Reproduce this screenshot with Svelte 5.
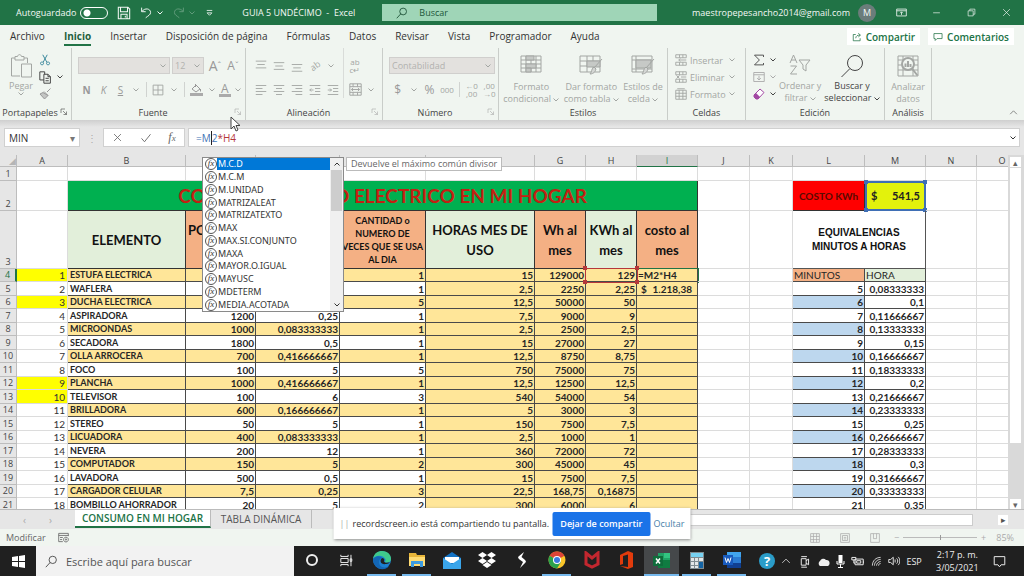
<script lang="ts">
  const tabs = ['Archivo', 'Inicio', 'Insertar', 'Disposición de página', 'Fórmulas', 'Datos', 'Revisar', 'Vista', 'Programador', 'Ayuda'];
  const columns = ['A', 'B', 'C', 'D', 'E', 'F', 'G', 'H', 'I', 'J', 'K', 'L', 'M', 'N', 'O'];
  const functions = ['M.C.D', 'M.C.M', 'M.UNIDAD', 'MATRIZALEAT', 'MATRIZATEXTO', 'MAX', 'MAX.SI.CONJUNTO', 'MAXA', 'MAYOR.O.IGUAL', 'MAYUSC', 'MDETERM', 'MEDIA.ACOTADA'];
  const marked = [1, 3, 9, 10];

  // elemento, potencia, horas, cantidad, horas mes, Wh, KWh, minutos, hora
  const rows = [
    ['ESTUFA ELECTRICA', '', '', '1', '15', '129000', '129', 'MINUTOS', 'HORA'],
    ['WAFLERA', '', '', '1', '2,5', '2250', '2,25', '5', '0,08333333'],
    ['DUCHA ELECTRICA', '', '', '5', '12,5', '50000', '50', '6', '0,1'],
    ['ASPIRADORA', '1200', '0,25', '1', '7,5', '9000', '9', '7', '0,11666667'],
    ['MICROONDAS', '1000', '0,083333333', '1', '2,5', '2500', '2,5', '8', '0,13333333'],
    ['SECADORA', '1800', '0,5', '1', '15', '27000', '27', '9', '0,15'],
    ['OLLA ARROCERA', '700', '0,416666667', '1', '12,5', '8750', '8,75', '10', '0,16666667'],
    ['FOCO', '100', '5', '5', '750', '75000', '75', '11', '0,18333333'],
    ['PLANCHA', '1000', '0,416666667', '1', '12,5', '12500', '12,5', '12', '0,2'],
    ['TELEVISOR', '100', '6', '3', '540', '54000', '54', '13', '0,21666667'],
    ['BRILLADORA', '600', '0,166666667', '1', '5', '3000', '3', '14', '0,23333333'],
    ['STEREO', '50', '5', '1', '150', '7500', '7,5', '15', '0,25'],
    ['LICUADORA', '400', '0,083333333', '1', '2,5', '1000', '1', '16', '0,26666667'],
    ['NEVERA', '200', '12', '1', '360', '72000', '72', '17', '0,28333333'],
    ['COMPUTADOR', '150', '5', '2', '300', '45000', '45', '18', '0,3'],
    ['LAVADORA', '500', '0,5', '1', '15', '7500', '7,5', '19', '0,31666667'],
    ['CARGADOR CELULAR', '7,5', '0,25', '3', '22,5', '168,75', '0,16875', '20', '0,33333333'],
    ['BOMBILLO AHORRADOR', '20', '5', '2', '300', '6000', '6', '21', '0,35'],
  ];

  // line icons on a 16 x 16 box
  const icons: Record<string, string> = {
    save: 'M1.5 1.5h11l2 2v11h-13zM4 1.5v5h8v-5M4.5 14.500v-5h7v5M9.500 11v2',
    undo: 'M2 2v5h5M2.500 6.500C6 2 13 3 13 8c0 3-3 4-6 6.500',
    redo: 'M14 2v5H9M13.500 6.500C10 2 3 3 3 8c0 3 3 4 6 6.500',
    custom: 'M4 5h8M4.500 8.500L8 12l3.500-3.500z',
    search: 'M9.500 1.500a4.500 4.500 0 1 1 0 9a4.500 4.500 0 1 1 0-9zM6.500 9L1 15',
    display: 'M1 3h14v10H1zM1 5.500h14M8 11.500v-4M6 9l2-2l2 2',
    minimize: 'M2 8.500h12',
    restore: 'M2 5h9v9H2zM5 5V2h9v9h-3',
    close: 'M2 2l12 12M14 2L2 14',
    share: 'M6 4H2v10h11v-4M6 10c0-4 3-5 7-5M10 2l3.500 3L10 8',
    comment: 'M1.500 2.500h13v8h-8l-3 3v-3h-2z',
    launcher: 'M2 10V2h8M6 6l7 7M13 7v6H7',
    top: 'M1 1.500h14M3 6h10M1 10.500h14',
    middle: 'M1 3.500h14M3 8h10M1 12.500h14',
    bottom: 'M1 6h14M3 10.500h10M1 15h14',
    left: 'M1 2h14M1 6h9M1 10h14M1 14h9',
    center: 'M1 2h14M4 6h8M1 10h14M4 14h8',
    right: 'M1 2h14M6 6h9M1 10h14M6 14h9',
    outdent: 'M1 2h14M8 6h7M8 10h7M1 14h14M6 8H1M3 6L1 8l2 2',
    indent: 'M1 2h14M8 6h7M8 10h7M1 14h14M1 8h5M4 6l2 2l-2 2',
    merge: 'M1 1h14v14H1zM1 4.500h14M1 11.500h14M5 1v3.500M10.500 1v3.500M5 11.500V15M10.500 11.500V15M3 8h10M5 6L3 8l2 2M11 6l2 2l-2 2',
    borders: 'M1.500 1.500h13v13h-13zM8 1.500v13M1.500 8h13',
    cut: 'M5 1l5.500 10M11 1L5.500 11M4 10.500a2 2 0 1 0 .1 0M12 10.500a2 2 0 1 0 .1 0',
    copy: 'M6 11H1V1h6v3M6 4h5l3 3v8H6zM11 4v3h3M8 9h4M8 12h4',
    filldown: 'M1 2h14v12H1zM1 5h14M8 6.500v5.500M5.500 9.500L8 12l2.500-2.500',
    cellIns: 'M1 1h14v4H1zM1 11h14v4H1zM6 1v4M10.500 1v4M6 11v4M10.500 11v4M5 8h10M7 6L5 8l2 2',
    cellDel: 'M1 1h14v4H1zM1 11h14v4H1zM6 1v4M10.500 1v4M6 11v4M10.500 11v4M2 6l4 4M6 6l-4 4M8 8h7',
    cellFmt: 'M1 3h14v12H1zM1 7h14M1 11h14M5.500 3v12M10.500 3v12M3 1h10',
    cancel: 'M3 3l10 10M13 3L3 13',
    accept: 'M2 8.500l4 4.500L14 3',
    grid: 'M1 1h14v14H1zM1 5.500h14M1 10.500h14M5.500 1v14M10.500 1v14',
    pageView: 'M1 1h14v14H1zM4 4h8v8H4zM6 7h4M6 9.500h4',
    breakView: 'M1 1h14v14H1zM5.500 1v8h5V1',
    up: 'M2 11l6-6l6 6',
    cam: 'M4 4.500h6v8H4zM10 7l3-2v7l-3-2M4 2h7M4 15h7',
    battery: 'M5 5h10v7H5zM15 7.500h1v2h-1M1 3h5v3H1zM3.500 6v4H5M7 7h5v3H7z',
    wifi: 'M2 14C2 7 7 2 14 2M5 14c0-5 4-9 9-9M8 14c0-3 3-6 6-6M11 14c0-2 1-3 3-3',
    sound: 'M1 6h2.500L7 3v10L3.500 10H1zM9.500 6v4M11.500 4.500c2 2 2 5 0 7M13.500 2.500c3 3 3 8 0 11',
    note: 'M1.500 2h13v10H10l-2 2.500L6 12H1.500z',
    taskview: 'M1 1v2h9V1M1 15v-2h9v2M1 5.500h9v5H1zM13.500 1v14M12.500 6h2v3h-2z',
    record: 'M1 2h14v4M1 2v12h6M1 5h14M3 8h4M3 11h3M11.500 7.500a3.500 3.500 0 1 0 .1 0M11.500 10a1 1 0 1 0 .1 0',
  };
</script>

{#snippet icon(name: string, size = 12)}
  <svg class="icon" width={size} height={size} viewBox="0 0 16 16" aria-hidden="true"><path d={icons[name]} /></svg>
{/snippet}

{#snippet chevron()}
  <svg class="chevron" width="6" height="4" viewBox="0 0 6 4" aria-hidden="true"><path d="M.5 .5L3 3L5.500 .5" /></svg>
{/snippet}

<div class="excel">
  <header class="titlebar">
    <label class="autosave">Autoguardado <input type="checkbox" role="switch" /></label>
    <button aria-label="Guardar">{@render icon('save', 14)}</button>
    <button class="undo" aria-label="Deshacer">{@render icon('undo', 13)}{@render chevron()}</button>
    <button class="redo" aria-label="Rehacer">{@render icon('redo', 13)}{@render chevron()}</button>
    <button aria-label="Personalizar">{@render icon('custom', 11)}</button>
    <span class="document">GUIA 5 UNDÉCIMO&nbsp; - &nbsp;Excel</span>
    <label class="search">{@render icon('search', 12)}<input type="text" placeholder="Buscar" aria-label="Buscar" /></label>
    <span class="account">maestropepesancho2014@gmail.com</span>
    <span class="avatar">M</span>
    <div class="window-buttons">
      <button aria-label="Opciones de cinta">{@render icon('display', 11)}</button>
      <button aria-label="Minimizar">{@render icon('minimize', 9)}</button>
      <button aria-label="Restaurar">{@render icon('restore', 9)}</button>
      <button aria-label="Cerrar">{@render icon('close', 9)}</button>
    </div>
  </header>

  <nav class="tabs">
    {#each tabs as tab}
      <button class:active={tab === 'Inicio'}>{tab}</button>
    {/each}
    <div class="tab-actions">
      <button>{@render icon('share', 10)} Compartir</button>
      <button>{@render icon('comment', 10)} Comentarios</button>
    </div>
  </nav>

  <section class="ribbon">
    <div class="group">
      <div class="clipboard">
        <button class="big">
          <svg width="23" height="26" viewBox="0 0 23 26" class="art"><path d="M5 4H1.500v18H10M14 4h3.500v5M5 2.500h2.500C8 0 11 0 11.500 2.500H14V6H5zM11.500 10h10v13h-10z" /></svg>
          <span>Pegar</span>{@render chevron()}
        </button>
        <div class="stack dark">
          <button class="cut" aria-label="Cortar">{@render icon('cut', 12)}</button>
          <button aria-label="Copiar">{@render icon('copy', 13)}{@render chevron()}</button>
          <button aria-label="Copiar formato">
            <svg width="13" height="12" viewBox="0 0 13 12"><path d="M8 4l3.500-3.500M5 3.500l4 4M4 4.500L1 6l4.500 5L9 7.500z" fill="#c4c6c4" stroke="#999" /></svg>
          </button>
        </div>
      </div>
      <footer><span>Portapapeles</span><i class="dark">{@render icon('launcher', 8)}</i></footer>
    </div>

    <div class="group">
      <div class="tools">
        <div class="line">
          <div class="drop"><select class="font-name" aria-label="Fuente"><option></option></select>{@render chevron()}</div>
          <div class="drop"><select class="font-size" aria-label="Tamaño"><option>12</option></select>{@render chevron()}</div>
          <button class="letter big-a">A<sup>ˆ</sup></button>
          <button class="letter">A<sup>ˇ</sup></button>
        </div>
        <div class="line">
          <button class="letter n">N</button>
          <button class="letter k">K</button>
          <button class="letter s">S</button>
          {@render chevron()}
          <hr />
          <button aria-label="Bordes">{@render icon('borders', 12)}</button>
          {@render chevron()}
          <hr />
          <button aria-label="Relleno">
            <svg width="13" height="13" viewBox="0 0 13 13"><path d="M5.500 1v3M2 6l4-4l4 4l-4 3zM10.500 6v2.500" fill="none" stroke="#999" /><path d="M0 10h13v3H0z" fill="#aaa" /></svg>
          </button>
          {@render chevron()}
          <button class="letter underlined">A</button>
          {@render chevron()}
        </div>
      </div>
      <footer><span>Fuente</span><i>{@render icon('launcher', 8)}</i></footer>
    </div>

    <div class="group">
      <div class="align">
        <div class="tools">
          <div class="line">
            <button aria-label="Arriba">{@render icon('top', 12)}</button>
            <button aria-label="Medio">{@render icon('middle', 12)}</button>
            <button aria-label="Abajo">{@render icon('bottom', 12)}</button>
            <button class="angle">ab</button>
            {@render chevron()}
          </div>
          <div class="line">
            <button aria-label="Izquierda">{@render icon('left', 12)}</button>
            <button aria-label="Centro">{@render icon('center', 12)}</button>
            <button aria-label="Derecha">{@render icon('right', 12)}</button>
            <button aria-label="Disminuir sangría">{@render icon('outdent', 12)}</button>
            <button aria-label="Aumentar sangría">{@render icon('indent', 12)}</button>
          </div>
        </div>
        <div class="tools wrap">
          <div class="line"><button class="wrap-text">ab<br />c↵</button></div>
          <div class="line"><button aria-label="Combinar">{@render icon('merge', 13)}</button>{@render chevron()}</div>
        </div>
      </div>
      <footer><span>Alineación</span><i>{@render icon('launcher', 8)}</i></footer>
    </div>

    <div class="group">
      <div class="tools">
        <div class="line">
          <div class="drop"><select class="format" aria-label="Formato de número"><option>Contabilidad</option></select>{@render chevron()}</div>
        </div>
        <div class="line">
          <button class="letter">$</button>
          {@render chevron()}
          <button class="letter">%</button>
          <button class="zeros">000</button>
          <hr />
          <button class="decimals">←0<br />,00</button>
          <button class="decimals">,00<br />→0</button>
        </div>
      </div>
      <footer><span>Número</span><i>{@render icon('launcher', 8)}</i></footer>
    </div>

    <div class="group">
      <div class="bigs">
        <button class="big">
          <svg width="22" height="18" viewBox="0 0 22 18" class="art"><path d="M1 1h20v16H1zM1 5h20M1 9h20M1 13h20M6 1v16M11 1v16M16 1v16" /><path class="shade" d="M6 1h8v4H6zM6 9h10v4H6zM6 13h5v4H6z" /></svg>
          <span>Formato<br />condicional {@render chevron()}</span>
        </button>
        <button class="big">
          <svg width="24" height="20" viewBox="0 0 24 20" class="art"><path d="M1 1h20v16H1zM1 6h20M1 11h20M8 1v16M14 1v16" /><path class="shade" d="M8 6h13v6H8z" /><path class="brush" d="M23 4l-8 9M15 12l2 2c-1 4-4 5-6 5c2-2 1-5 4-7z" /></svg>
          <span>Dar formato<br />como tabla {@render chevron()}</span>
        </button>
        <button class="big">
          <svg width="24" height="20" viewBox="0 0 24 20" class="art"><path d="M1 1h20v16H1zM1 5h20M1 14h20M5 1v16" /><path class="shade" d="M5 5h15v8H5z" /><path class="brush" d="M23 4l-8 9M15 12l2 2c-1 4-4 5-6 5c2-2 1-5 4-7z" /></svg>
          <span>Estilos de<br />celda {@render chevron()}</span>
        </button>
      </div>
      <footer><span>Estilos</span></footer>
    </div>

    <div class="group">
      <div class="stack cells">
        <button>{@render icon('cellIns', 12)}<span>Insertar</span>{@render chevron()}</button>
        <button>{@render icon('cellDel', 12)}<span>Eliminar</span>{@render chevron()}</button>
        <button>{@render icon('cellFmt', 12)}<span>Formato</span>{@render chevron()}</button>
      </div>
      <footer><span>Celdas</span></footer>
    </div>

    <div class="group">
      <div class="edit">
        <div class="stack dark">
          <button aria-label="Autosuma"><svg class="icon" width="12" height="12" viewBox="0 0 16 16"><path d="M14 4V1.500H2L8.500 8L2 14.500h12V12" /></svg>{@render chevron()}</button>
          <button class="off" aria-label="Rellenar">{@render icon('filldown', 12)}{@render chevron()}</button>
          <button aria-label="Borrar">
            <svg width="12" height="12" viewBox="0 0 12 12"><path d="M1 7L7 1l4 3.500L5 11H3L1 9z" fill="#fff" stroke="#a349a4" /><path d="M1 7l2-2l4 4l-2 2H3L1 9z" fill="#a349a4" /></svg>
            {@render chevron()}
          </button>
        </div>
        <button class="big">
          <svg width="22" height="22" viewBox="0 0 22 22" class="art"><path d="M1 9L4.500 1L8 9M2 6h5M1.500 12h6l-6 8h6.500M10 6h11l-4 5v6l-3-2v-4z" /></svg>
          <span>Ordenar y<br />filtrar {@render chevron()}</span>
        </button>
        <button class="big dark">
          <svg width="24" height="24" viewBox="0 0 24 24" class="art"><path d="M15 1.500a7.500 7.500 0 1 1 0 15a7.500 7.500 0 1 1 0-15zM10 14.500L1.500 23" /></svg>
          <span>Buscar y<br />seleccionar {@render chevron()}</span>
        </button>
      </div>
      <footer><span>Edición</span></footer>
    </div>

    <div class="group">
      <div class="bigs">
        <button class="big">
          <svg width="22" height="22" viewBox="0 0 22 22" class="art"><path d="M1 1h20v20H1zM1 5h20M1 10h20M1 15h20M6 1v20M16 1v20" /><path d="M11 3a6 6 0 1 1 0 12a6 6 0 1 1 0-12zM15 13.500l5.500 7" fill="#f0f5f0" stroke-width="2" /><path d="M8.500 12V8.500M11 12V6M13.500 12V9" stroke-width="2" /></svg>
          <span>Analizar<br />datos</span>
        </button>
      </div>
      <footer><span>Análisis</span></footer>
    </div>
    <button class="collapse" aria-label="Contraer la cinta">{@render icon('up', 9)}</button>
  </section>

  <section class="formula-bar">
    <div class="name-box"><input type="text" value="MIN" aria-label="Cuadro de nombres" /><button aria-label="Nombres">▾</button></div>
    <span class="grip">⋮</span>
    <div class="formula-buttons">
      <button aria-label="Cancelar">{@render icon('cancel', 11)}</button>
      <button aria-label="Introducir">{@render icon('accept', 12)}</button>
      <button class="fx">f<small>x</small></button>
    </div>
    <div class="formula">
      <div class="formula-text" contenteditable="true" role="textbox" tabindex="0" aria-label="Barra de fórmulas"><span class="ref-m">=M<span class="caret">2</span></span><span class="ref-h">*H4</span></div>
      <button aria-label="Expandir">{@render chevron()}</button>
    </div>
  </section>

  <main class="sheet">
    <div class="cells-area">
      <table>
        <colgroup>
          <col class="w-row" />
          {#each columns as column}
            <col class="w-{column}" />
          {/each}
        </colgroup>
        <thead>
          <tr>
            <th class="corner">◢</th>
            {#each columns as column}
              <th class:current={column === 'I'}>{column}</th>
            {/each}
          </tr>
        </thead>
        <tbody>
          <tr class="r1">
            <th>1</th>
            {#each columns as _}<td></td>{/each}
          </tr>
          <tr class="r2">
            <th>2</th>
            <td></td>
            <td colspan="8" class="heading">CONSUMO DIARIO ELECTRICO EN MI HOGAR</td>
            <td></td><td></td>
            <td class="cost">COSTO KWh</td>
            <td class="price"><div class="money"><span>$</span><span>541,5</span></div><i class="handle tl"></i><i class="handle tr"></i><i class="handle bl"></i><i class="handle br"></i></td>
            <td></td><td></td>
          </tr>
          <tr class="r3">
            <th>3</th>
            <td></td>
            <td class="title mint">ELEMENTO</td>
            <td class="title orange">POTENCIA W</td>
            <td class="title orange"></td>
            <td class="title orange small">CANTIDAD o<br />NUMERO DE<br />VECES QUE SE USA<br />AL DIA</td>
            <td class="title mint">HORAS MES DE USO</td>
            <td class="title orange">Wh al mes</td>
            <td class="title mint">KWh al mes</td>
            <td class="title orange">costo al mes</td>
            <td></td><td></td>
            <td colspan="2" class="equiv">EQUIVALENCIAS<br />MINUTOS A HORAS</td>
            <td></td><td></td>
          </tr>
          {#each rows as row, i}
            <tr class="data" class:band={i % 2 === 0}>
              <th class:current={i === 0}>{i + 4}</th>
              <td class="count" class:yellow={marked.includes(i + 1)}>{i + 1}</td>
              <td class="box item">{row[0]}</td>
              <td class="box">{row[1]}</td>
              <td class="box">{row[2]}</td>
              <td class="box">{row[3]}</td>
              <td class="box sand">{row[4]}</td>
              <td class="box sand">{row[5]}</td>
              <td class="box sand" class:ref={i === 0}>{row[6]}{#if i === 0}<i class="handle tl"></i><i class="handle tr"></i><i class="handle bl"></i><i class="handle br"></i>{/if}</td>
              {#if i === 0}
                <td class="box sand editing">=M2*H4</td>
              {:else if i === 1}
                <td class="box sand"><div class="money"><span>$</span><span>1.218,38</span></div></td>
              {:else}
                <td class="box sand"></td>
              {/if}
              <td></td><td></td>
              {#if i === 0}
                <td class="box plain orange">{row[7]}</td>
                <td class="box plain mint">{row[8]}</td>
              {:else}
                <td class="box" class:blue={i % 2 === 0} class:white={i % 2 !== 0}>{row[7]}</td>
                <td class="box white">{row[8]}</td>
              {/if}
              <td></td><td></td>
            </tr>
          {/each}
        </tbody>
      </table>
    </div>
    <div class="vscroll"><button aria-label="Subir">▴</button><span></span><button aria-label="Bajar">▾</button></div>

    <div class="suggest">
      <ul role="listbox" aria-label="Funciones">
        {#each functions as name, i}
          <li role="option" aria-selected={i === 0} class:selected={i === 0}><b>fx</b><span>{name}</span></li>
        {/each}
      </ul>
      <div class="suggest-scroll">{@render chevron()}<span></span>{@render chevron()}</div>
    </div>
    <div class="hint" role="tooltip">Devuelve el máximo común divisor</div>
  </main>

  <nav class="sheet-tabs">
    <span class="arrows"><button aria-label="Anterior">‹</button><button aria-label="Siguiente">›</button></span>
    <button class="sheet-tab active">CONSUMO EN MI HOGAR</button>
    <button class="sheet-tab">TABLA DINÁMICA</button>
    <div class="hscroll"><span></span><button aria-label="Derecha">▸</button></div>
  </nav>

  <footer class="status">
    <span class="mode">Modificar</span>
    {@render icon('record', 11)}
    <div class="views">
      {@render icon('grid', 10)}
      {@render icon('pageView', 10)}
      {@render icon('breakView', 10)}
    </div>
    <span class="minus">−</span>
    <input type="range" min="10" max="160" value="85" aria-label="Zoom" />
    <span class="plus">+</span>
    <span class="zoom">85%</span>
  </footer>

  <footer class="taskbar">
    <button class="start" aria-label="Inicio"><svg width="13" height="13" viewBox="0 0 13 13"><path d="M0 2l6-1v5H0zM7 1l6-1v6H7zM0 7h6v5l-6-1zM7 7h6v6l-6-1z" fill="#fff" /></svg></button>
    <label class="task-search">{@render icon('search', 13)}<input type="text" placeholder="Escribe aquí para buscar" aria-label="Escribe aquí para buscar" /></label>
    <div class="apps">
      <button aria-label="Cortana"><svg width="14" height="14" viewBox="0 0 14 14"><circle cx="7" cy="7" r="5" fill="none" stroke="#eee" stroke-width="2" /></svg></button>
      <button aria-label="Vista de tareas">{@render icon('taskview', 13)}</button>
      <button class="open" aria-label="Edge"><svg width="20" height="20" viewBox="0 0 20 20"><circle cx="10" cy="10" r="9" fill="#1b7fd0" /><path d="M1 9C2 3 6 1 10 1c6 0 9 4 9 8c0 3-3 4-6 3.500c-1-.5 1-1 .5-3C12 5 4 4 1 9z" fill="#3fc98c" /><path d="M1 9c3-4 8-3 9-1c-4 1-4 7 0 9c3 1 6 0 7-1c-3 4-9 4-12 1.500C2 15 1 12 1 9z" fill="#1366b5" /><path d="M10 8c-3 3-1 7 4 6c2 0 3-1 4-1.500c-2 0-6 1-6-1.500c1-1 0-3-2-3z" fill="#202020" /></svg></button>
      <button class="open" aria-label="Explorador"><svg width="18" height="16" viewBox="0 0 18 16"><path d="M1 1h7l1 2h8v11H1z" fill="#e8b63a" /><path d="M1 5h16v9H1z" fill="#ffdc73" /><path d="M3 9h12v6h-3v-3H6v3H3z" fill="#3d9be0" /></svg></button>
      <button aria-label="Correo"><svg width="18" height="17" viewBox="0 0 18 17"><path d="M0 6l9-6l9 6v11H0z" fill="#1272c4" /><path d="M2 5h14v6H2z" fill="#fff" /><path d="M0 6l9 6l9-6v11H0z" fill="#3aa5ea" /></svg></button>
      <button aria-label="Dropbox"><svg width="18" height="16" viewBox="0 0 18 16"><path d="M4.500 0L9 3L4.500 6L0 3zM13.500 0L18 3l-4.500 3L9 3zM4.500 6L9 9l-4.500 3L0 9zM13.500 6L18 9l-4.500 3L9 9zM9 10l4.500 3L9 16l-4.500-3z" fill="#fff" /></svg></button>
      <button aria-label="Lector"><svg width="10" height="18" viewBox="0 0 10 18"><path d="M7 1L1.500 5.500c-1 1 0 2 1 3L6 11L3 17l5.500-5.500c1-1 0-2-1-3L4.500 6z" fill="#fff" /></svg></button>
      <button class="open" aria-label="Chrome"><svg width="18" height="18" viewBox="0 0 18 18"><circle cx="9" cy="9" r="8.500" fill="#f9c529" /><path d="M9 9L1.600 4.800A8.500 8.500 0 0 1 16.400 4.800z" fill="#dc4437" /><path d="M9 9L1.600 4.800A8.500 8.500 0 0 0 9 17.500L13 11z" fill="#2ba24c" /><circle cx="9" cy="9" r="4" fill="#fff" /><circle cx="9" cy="9" r="3" fill="#3b79e0" /></svg></button>
      <button aria-label="McAfee"><svg width="16" height="18" viewBox="0 0 16 18"><path d="M2 2l6 5l6-5v11l-6 3l-6-3z" fill="none" stroke="#c3272f" stroke-width="3" /></svg></button>
      <button aria-label="Office"><svg width="15" height="18" viewBox="0 0 15 18"><path d="M9 0l5 2v14l-5 2l-8-3l8 1V3.500L4 5v8l-3 1V4z" fill="#e23b0c" /></svg></button>
      <button class="open focus" aria-label="Excel"><svg width="18" height="17" viewBox="0 0 18 17"><path d="M5 1h12v15H5z" fill="#21a366" /><path d="M11 1h6v5h-6z" fill="#33c481" /><path d="M5 8h12v8H5z" fill="#107c41" /><path d="M0 4h10v10H0z" fill="#0f6d3b" /><path d="M3 6.500l4 5M7 6.500l-4 5" stroke="#fff" stroke-width="1.500" /></svg></button>
      <button class="open" aria-label="Calculadora"><svg width="14" height="17" viewBox="0 0 14 17"><path d="M0 0h14v17H0z" fill="#7f8b90" /><path d="M1 1h12v4H1z" fill="#77d2f2" /><path d="M1 6h3v3H1zM5 6h3v3H5zM9 6h4v3H9zM1 10h3v3H1zM5 10h3v3H5zM1 14h3v2H1zM5 14h3v2H5z" fill="#e3e6e7" /><path d="M9 10h4v6H9z" fill="#1464a5" /></svg></button>
      <button class="open" aria-label="Word"><svg width="18" height="16" viewBox="0 0 18 16"><path d="M4 0h14v16H4z" fill="#2b7cd3" /><path d="M4 0h14v5H4z" fill="#41a5ee" /><path d="M4 11h14v5H4z" fill="#103f91" /><path d="M0 3h10v10H0z" fill="#185abd" /><path d="M2 5.500l1.500 5L5 6.500l1.500 4L8 5.500" fill="none" stroke="#fff" /></svg></button>
    </div>
    <div class="tray">
      <span class="help">?</span>
      {@render icon('up', 10)}
      {@render icon('cam', 13)}
      <svg width="13" height="9" viewBox="0 0 13 9"><path d="M3 9a3 3 0 0 1 0-5a3.500 3.500 0 0 1 6-1a3 3 0 0 1 3.500 3.500A2.500 2.500 0 0 1 11 9z" fill="#eee" /></svg>
      <svg width="9" height="13" viewBox="0 0 9 13"><path d="M2.500 0h4v8h-4z" fill="#fff" /><path d="M1 6v3h7V6M4.500 9v3.500M2 12.500h5" fill="none" stroke="#fff" /></svg>
      {@render icon('battery', 13)}
      {@render icon('wifi', 11)}
      {@render icon('sound', 12)}
      <span class="lang">ESP</span>
      <span class="clock">2:17 p. m.<br />3/05/2021</span>
      {@render icon('note', 13)}
    </div>
  </footer>

  <div class="sharing" role="status">
    <span class="bars">||</span>
    <span>recordscreen.io está compartiendo tu pantalla.</span>
    <button>Dejar de compartir</button>
    <a href="#ocultar">Ocultar</a>
  </div>
  <svg class="pointer" width="11" height="16" viewBox="0 0 11 16"><path d="M1 1v12l3-3l2 5l2-1l-2-4.500h4z" fill="#fff" stroke="#444" /></svg>
</div>

<style>
  :global(body) {
    font-family: "Open Sans", "Noto Sans", sans-serif;
    font-size: 10px;
    color: #333;
  }

  .excel {
    position: relative;
    display: flex;
    flex-direction: column;
    height: 100vh;
    overflow: hidden;
    background: #e6e6e6;
  }

  button, input, select {
    font: inherit;
    color: inherit;
    border: 0;
    padding: 0;
    margin: 0;
    background: none;
    box-sizing: border-box;
    outline: 0;
  }
  button {
    display: inline-flex;
    align-items: center;
    justify-content: center;
    white-space: nowrap;
  }
  svg { flex: none; }
  .icon, .chevron {
    fill: none;
    stroke: currentColor;
    stroke-width: 1.2px;
  }
  .chevron { stroke-width: 1px; }

  /* title bar */
  .titlebar {
    flex: none;
    display: flex;
    align-items: center;
    height: 25px;
    padding-left: 16px;
    background: #217346;
    color: #f3f8f5;
    font-size: 9px;
  }
  .autosave {
    display: flex;
    align-items: center;
    gap: 4px;
    margin-right: 9px;
  }
  .autosave input {
    appearance: none;
    width: 28px;
    height: 12px;
    border: 1px solid #fff;
    border-radius: 6px;
    background: radial-gradient(circle at 6px 5px, #fff 3px, transparent 4px);
  }
  .undo, .redo { gap: 4px; margin-left: 9px; }
  .redo { opacity: .3; margin-right: 9px; }
  .document { margin-left: 27px; width: 140px; }
  .search {
    display: flex;
    align-items: center;
    gap: 11px;
    flex: 1;
    max-width: 275px;
    height: 17px;
    box-sizing: border-box;
    padding-left: 14px;
    background: #9fd5b7;
    color: #20553a;
  }
  .search input { flex: 1; min-width: 0; }
  .search input::placeholder { color: #20553a; opacity: 1; }
  .account { margin-left: auto; }
  .avatar {
    width: 18px;
    line-height: 18px;
    margin-left: 8px;
    border-radius: 50%;
    background: #6b7d7b;
    text-align: center;
  }
  .window-buttons { display: flex; margin-left: 8px; }
  .window-buttons button { width: 35px; }

  /* ribbon tabs */
  .tabs {
    flex: none;
    display: flex;
    align-items: center;
    height: 23px;
    padding-left: 10px;
    gap: 19px;
    background: #f0f5f0;
  }
  .tabs > button { height: 18px; border-bottom: 2px solid transparent; }
  .tabs > button.active { font-weight: bold; color: #1f5f3d; border-color: #217346; }
  .tab-actions { display: flex; gap: 8px; margin-left: auto; padding-right: 10px; }
  .tab-actions button {
    height: 17px;
    padding: 0 5px;
    gap: 4px;
    background: #fff;
    color: #217346;
    font-weight: 600;
  }

  /* ribbon */
  .ribbon {
    flex: none;
    display: grid;
    grid-template-columns: 72px 174px 137px 116px 169px 78px 139px 47px 1fr;
    height: 72px;
    background: #f0f5f0;
    font-size: 9px;
    color: #a3a6a3;
  }
  .group {
    position: relative;
    display: flex;
    flex-direction: column;
    justify-content: space-between;
    min-width: 0;
    border-right: 1px solid #c9cdc9;
  }
  .group footer {
    display: flex;
    height: 13px;
    line-height: 12px;
    color: #444;
  }
  .group footer span { flex: 1; text-align: center; }
  .group footer i { width: 11px; color: #aaa; }
  .dark, .group footer .dark { color: #444; }
  .clipboard, .edit, .bigs, .align { display: flex; }
  .clipboard { padding: 6px 0 0 9px; gap: 6px; }
  .big {
    flex-direction: column;
    justify-content: space-between;
    line-height: 12px;
    height: 50px;
  }
  .clipboard .big { justify-content: flex-start; }
  .big .chevron { vertical-align: middle; }
  .art { fill: none; stroke: currentColor; }
  .shade { fill: #c6c9c6; }
  .brush { fill: #d4d6d4; }
  .stack {
    display: flex;
    flex-direction: column;
    gap: 5px;
    align-items: flex-start;
  }
  .stack button { height: 12px; gap: 5px; }
  .cut { color: #2b7f95; }
  .off { color: #aaa; }
  .tools { display: flex; flex-direction: column; gap: 7px; padding: 9px 0 0 6px; }
  .line { display: flex; align-items: center; height: 17px; }
  .line button { width: 18px; }
  .line .chevron { margin: 0 4px; }
  .line hr { width: 1px; height: 15px; margin: 0 3px; border: 0; background: #d0d3d0; }
  .drop { display: grid; align-items: center; margin-right: 2px; }
  .drop select, .drop .chevron { grid-area: 1 / 1; }
  .drop .chevron { justify-self: end; pointer-events: none; }
  select {
    appearance: none;
    height: 17px;
    border: 1px solid #d0cfcd;
    background: #e3e1de;
    padding-left: 2px;
    color: #b2b1af;
    opacity: 1;
  }
  .font-name { width: 92px; }
  .font-size { width: 32px; }
  .format { width: 106px; }
  .line .letter { font-size: 12px; color: #999; }
  .line .big-a { font-size: 14px; }
  .letter sup { font-size: 9px; }
  .line .n { font-weight: bold; font-size: 10px; }
  .line .k { font-style: italic; font-size: 10px; }
  .line .s { text-decoration: underline; font-size: 10px; }
  .line .underlined { width: 13px; height: 15px; border-bottom: 3px solid #aaa; }
  .angle { transform: rotate(-35deg); }
  .wrap { border-left: 1px solid #d9dcd9; margin-left: 1px; padding-left: 2px; }
  .wrap-text, .decimals { font-size: 8px; line-height: 8px; }
  .zeros { font-size: 8px; }
  .bigs { justify-content: space-around; padding: 7px 2px 0; }
  .cells { padding: 6px 0 0 7px; }
  .cells button { gap: 3px; }
  .cells span { width: 36px; text-align: left; }
  .edit { padding: 6px 0 0 7px; gap: 3px; }
  .collapse { align-self: end; justify-self: end; margin: 0 6px 3px 0; color: #555; }

  /* formula bar */
  .formula-bar {
    flex: none;
    display: flex;
    align-items: center;
    height: 35px;
    padding: 0 4px;
    box-sizing: border-box;
    background: linear-gradient(#cfcfcf, #e6e6e6 7px);
  }
  .name-box, .formula-buttons, .formula {
    display: flex;
    align-items: center;
    height: 19px;
    box-sizing: border-box;
    border: 1px solid #d0d0d0;
    background: #fff;
  }
  .name-box { width: 76px; }
  .name-box input { flex: 1; min-width: 0; padding-left: 4px; }
  .name-box button { width: 14px; color: #777; }
  .grip { width: 23px; text-align: center; color: #aaa; }
  .formula-buttons { width: 82px; justify-content: space-around; color: #666; }
  .fx { font-family: "Liberation Serif", serif; font-style: italic; font-size: 12px; }
  .fx small { font-size: 9px; }
  .formula { flex: 1; margin-left: 3px; padding: 0 3px 0 7px; }
  .formula-text { flex: 1; outline: 0; }
  .ref-m { color: #3f74b5; }
  .ref-h { color: #b5383a; }
  .caret { border-left: 1px solid #222; }

  /* grid */
  .sheet { position: relative; flex: 1; min-height: 0; display: flex; }
  .cells-area { flex: 1; min-width: 0; overflow: hidden; background: #fff; }
  table {
    width: 100%;
    table-layout: fixed;
    border-collapse: separate;
    border-spacing: 0;
    font-family: Lato, sans-serif;
  }
  .w-row { width: 17px; }
  .w-A, .w-G, .w-H, .w-N, .w-O { width: 51px; }
  .w-J { width: 52px; }
  .w-B { width: 118px; }
  .w-C { width: 70px; }
  .w-D { width: 84px; }
  .w-E { width: 86px; }
  .w-F { width: 109px; }
  .w-I, .w-M { width: 61px; }
  .w-K { width: 43px; }
  .w-L { width: 72px; }
  th, td {
    position: relative;
    padding: 0;
    box-sizing: border-box;
    border-right: 1px solid #dcdcdc;
    border-bottom: 1px solid #dcdcdc;
    line-height: 12px;
    white-space: nowrap;
  }
  th {
    background: #e6e6e6;
    border-color: #bdbdbd;
    color: #444;
    font-family: "Open Sans", sans-serif;
    font-size: 9px;
    font-weight: normal;
    vertical-align: bottom;
  }
  thead th { height: 12px; line-height: 11px; }
  thead .current { background: #d2d2d2; border-bottom-color: #217346; color: #217346; }
  tbody .current { background: #d8d8d8; border-right: 2px solid #217346; color: #217346; }
  .corner { text-align: right; color: #b5b5b5; }
  .r1 { height: 14px; }
  .r2 { height: 30px; }
  .r3 { height: 58px; }
  .data { height: 13px; }
  .data:nth-child(odd) { height: 14px; }
  .heading {
    background: #00b050;
    border-color: #333;
    color: #c32012;
    font-size: 19px;
    line-height: 24px;
    font-weight: bold;
    text-align: center;
  }
  .cost {
    background: #f00;
    border-color: #333;
    color: #5a0a00;
    font-weight: bold;
    font-size: 10px;
    text-align: center;
  }
  .price {
    background: #e3f20c;
    border: 2px solid #3f6fb5;
    font-weight: bold;
    font-size: 11px;
    color: #222;
  }
  .money { display: flex; justify-content: space-between; padding: 0 4px; }
  .title {
    border-color: #333;
    color: #111;
    font-size: 13px;
    line-height: 20px;
    font-weight: bold;
    text-align: center;
    white-space: normal;
  }
  .small { font-size: 9px; line-height: 13px; white-space: nowrap; }
  .mint { background: #e2efda; }
  .orange { background: #f4b084; }
  .equiv {
    border-color: #555;
    font-family: "Liberation Sans", sans-serif;
    font-size: 10px;
    line-height: 14px;
    font-weight: bold;
    text-align: center;
    color: #111;
  }
  .count { text-align: right; padding-right: 2px; font-size: 10px; }
  .yellow { background: #ff0; }
  .box {
    border-color: #4a4a4a;
    padding-right: 1px;
    font-size: 10px;
    font-weight: bold;
    text-align: right;
    color: #262626;
  }
  .item { text-align: left; padding-left: 2px; font-size: 9px; }
  .plain { text-align: left; font-weight: normal; padding-left: 1px; }
  .band .box:not(.white):not(.blue):not(.plain), .sand { background: #ffe699; }
  .white { background: #fff; }
  .blue { background: #bdd7ee; }
  .band .box.ref { background: #f8cf8c; outline: 1px solid #b5383a; z-index: 1; }
  .editing { text-align: left; padding-left: 1px; outline: 1px solid #217346; }
  .handle { position: absolute; width: 4px; height: 4px; background: #b5383a; }
  .price .handle { background: #3f6fb5; }
  .tl { left: -3px; top: -3px; }
  .tr { right: -3px; top: -3px; }
  .bl { left: -3px; bottom: -3px; }
  .br { right: -3px; bottom: -3px; }

  .vscroll {
    display: flex;
    flex-direction: column;
    width: 16px;
    padding: 2px 3px 0 2px;
    box-sizing: border-box;
    background: #d9d9d9;
  }
  .vscroll button { height: 10px; background: #fff; color: #666; font-size: 9px; }
  .vscroll span { flex: 1; margin: 1px 0 56px; background: #fff; }

  /* function suggestions */
  .suggest {
    position: absolute;
    z-index: 2;
    left: 202px;
    top: 2px;
    display: flex;
    width: 142px;
    height: 155px;
    box-sizing: border-box;
    border: 1px solid #8a8a8a;
    background: #fff;
  }
  .suggest ul {
    flex: 1;
    display: grid;
    grid-auto-rows: 1fr;
    margin: 0;
    padding: 0 0 0 2px;
    list-style: none;
    font-family: "Noto Sans", sans-serif;
    font-size: 9px;
  }
  .suggest li { display: flex; align-items: center; line-height: 12px; }
  .suggest li b {
    width: 10px;
    height: 10px;
    border: 1px solid #555;
    border-radius: 50%;
    font: italic 9px/9px "Liberation Serif", serif;
    text-align: center;
  }
  .suggest li span { flex: 1; padding-left: 1px; }
  .selected span { background: #0078d7; color: #fff; }
  .suggest-scroll {
    display: flex;
    flex-direction: column;
    align-items: center;
    width: 13px;
    padding: 4px 0;
    background: #f0f0f0;
  }
  .suggest-scroll .chevron:first-child { transform: rotate(180deg); }
  .suggest-scroll span { width: 11px; height: 41px; margin: 4px 0 auto; background: #cdcdcd; }
  .hint {
    position: absolute;
    z-index: 2;
    left: 346px;
    top: 2px;
    padding: 0 4px;
    border: 1px solid #bbb;
    background: #fff;
    font-size: 9px;
    line-height: 12px;
    color: #666;
  }

  /* bottom bars */
  .sheet-tabs {
    flex: none;
    display: flex;
    height: 20px;
    box-sizing: border-box;
    border-top: 1px solid #bbb;
    color: #555;
  }
  .arrows { display: flex; justify-content: space-evenly; width: 75px; color: #aaa; }
  .sheet-tab { height: 18px; width: 101px; border-right: 1px solid #bbb; }
  .sheet-tab.active { width: 136px; background: #fff; color: #217346; font-weight: 600; border-bottom: 2px solid #217346; }
  .hscroll { flex: 1; display: flex; align-items: center; margin: 0 16px 0 200px; }
  .hscroll span { flex: 1; height: 10px; background: #fff; border: 1px solid #ccc; }
  .hscroll button { width: 10px; height: 10px; margin-left: 25px; background: #fff; font-size: 9px; }
  .status {
    flex: none;
    display: flex;
    align-items: center;
    height: 17px;
    padding: 0 10px 0 6px;
    background: #f0f5f0;
    font-size: 9px;
    color: #666;
  }
  .mode { width: 52px; }
  .views { display: flex; gap: 20px; margin-left: auto; margin-right: 14px; color: #aaa; }
  .status input { appearance: none; width: 74px; height: 1px; margin: 0 4px; background: #bbb; }
  .status input::-webkit-slider-thumb { appearance: none; width: 1px; height: 5px; background: #999; }
  .minus, .plus, .zoom { color: #aaa; }
  .zoom { margin-left: 10px; }

  .taskbar {
    flex: none;
    display: flex;
    height: 30px;
    background: #202020;
    color: #eee;
  }
  .start { width: 36px; }
  .task-search {
    display: flex;
    align-items: center;
    gap: 8px;
    width: 258px;
    box-sizing: border-box;
    padding-left: 9px;
    background: #f2f2f2;
    color: #555;
  }
  .task-search input { flex: 1; font-size: 11px; }
  .task-search input::placeholder { color: #555; opacity: 1; }
  .apps { display: flex; }
  .apps button { width: 35px; border-bottom: 2px solid transparent; }
  .apps .open { width: 29px; margin: 0 3px; border-color: #76b9ed; }
  .apps .focus { width: 35px; margin: 0; background: #45484a; }
  .tray { flex: 1; display: flex; align-items: center; justify-content: space-between; padding: 0 18px 0 10px; font-size: 9px; }
  .help {
    width: 16px;
    line-height: 16px;
    border-radius: 50%;
    background: #2a9cc8;
    color: #fff;
    font-size: 13px;
    font-weight: bold;
    text-align: center;
  }
  .clock { line-height: 13px; text-align: center; margin: 0 8px; }

  .sharing {
    position: absolute;
    z-index: 3;
    left: 50%;
    bottom: 37px;
    transform: translateX(-50%);
    display: flex;
    align-items: center;
    justify-content: space-between;
    width: 357px;
    height: 31px;
    box-sizing: border-box;
    padding: 0 6px;
    background: #fff;
    box-shadow: 0 1px 3px #888;
    font-size: 9px;
    white-space: nowrap;
  }
  .bars { color: #aaa; }
  .sharing button { flex: none; width: 98px; height: 24px; border-radius: 2px; background: #1a73e8; color: #fff; font-weight: 600; }
  .sharing a { color: #4a80a8; text-decoration: none; }
  .pointer { position: absolute; z-index: 3; left: 230px; top: 116px; }
</style>
